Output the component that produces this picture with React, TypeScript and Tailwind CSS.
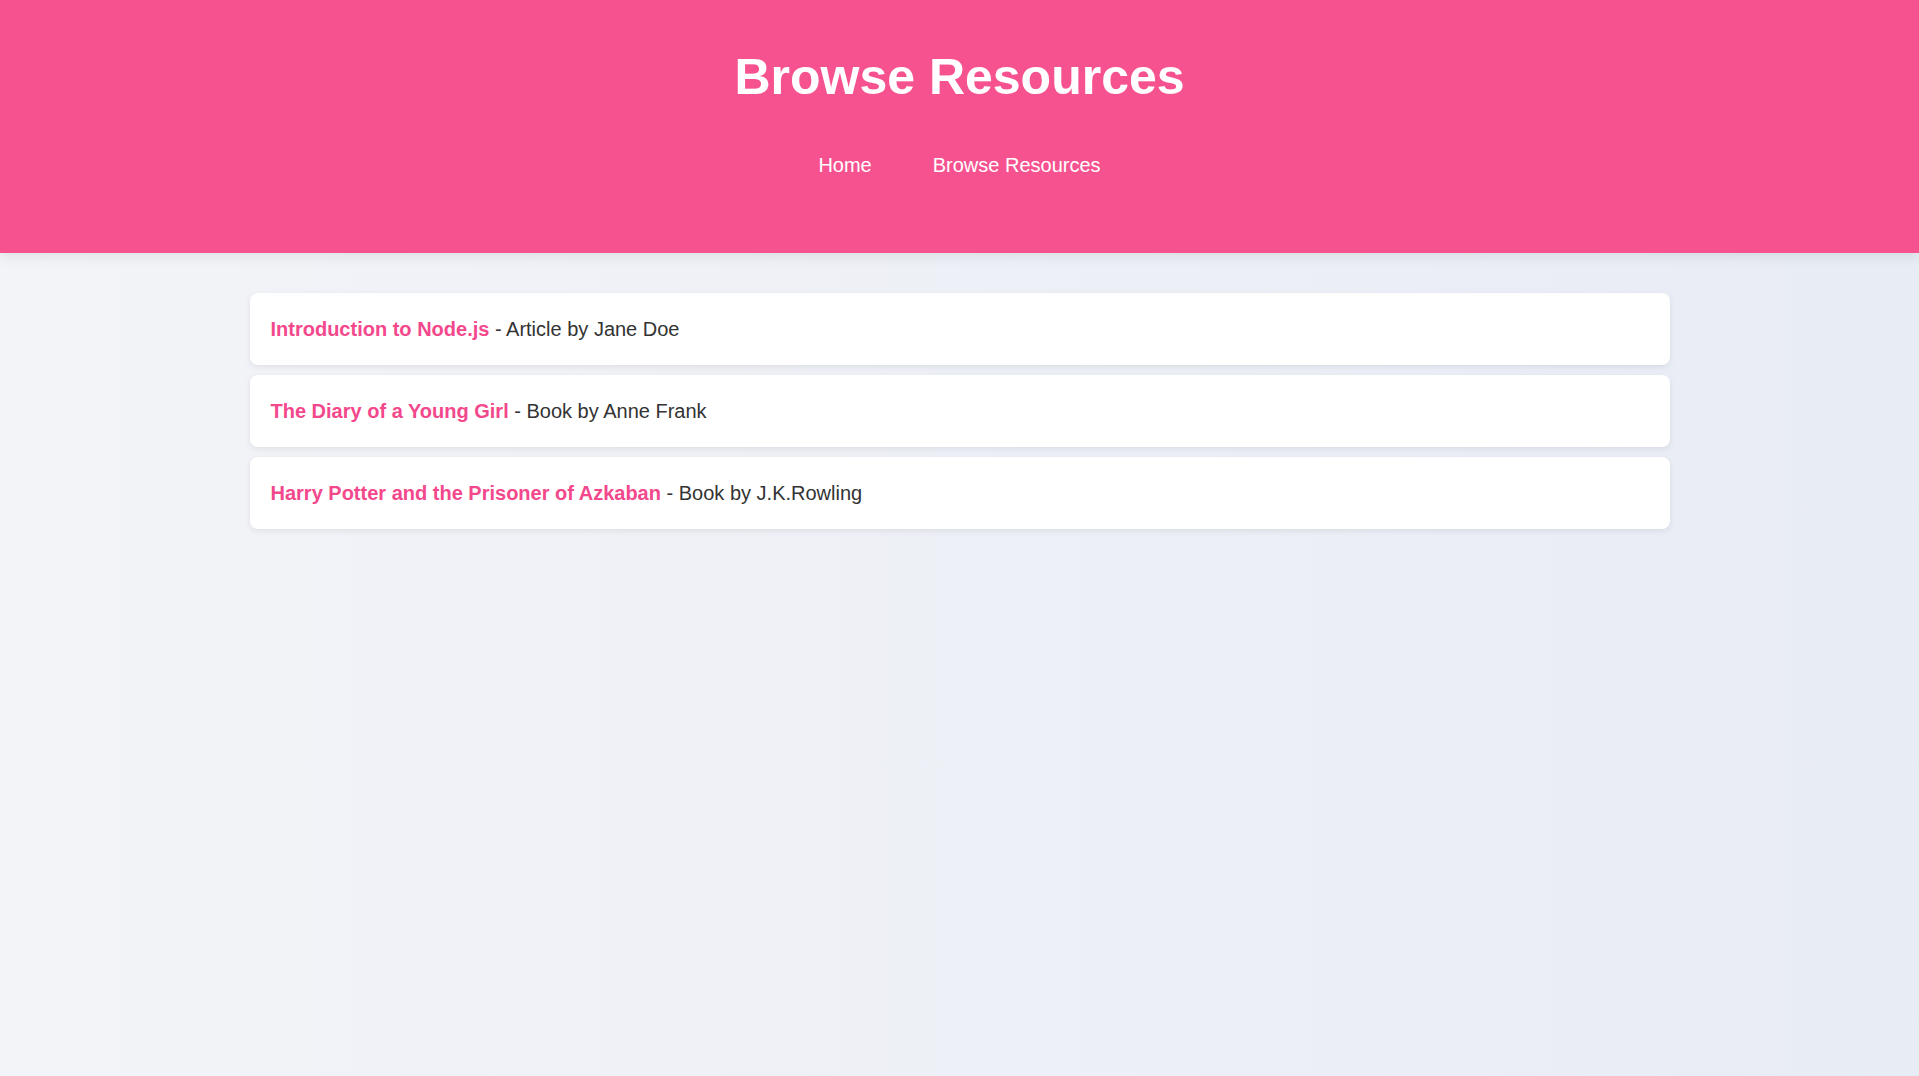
const resources = [
  { title: "Introduction to Node.js", kind: "Article", author: "Jane Doe" },
  { title: "The Diary of a Young Girl", kind: "Book", author: "Anne Frank" },
  { title: "Harry Potter and the Prisoner of Azkaban", kind: "Book", author: "J.K.Rowling" },
];

export default function App() {
  return (
    <div className="min-h-screen bg-gradient-to-r from-[#f3f4f8] to-[#e8ecf5] font-['Liberation_Sans',Arial,sans-serif]">
      <header className="h-[253px] bg-[#f75290] text-white text-center shadow-[0_4px_12px_rgba(0,0,0,0.08)]">
        <h1 className="pt-[41px] text-[50px] font-bold leading-[72px]">Browse Resources</h1>
        <nav className="mt-[40px] flex justify-center gap-[61px] text-[20px] leading-[24px]">
          <a href="#" className="text-white">Home</a>
          <a href="#" className="text-white">Browse Resources</a>
        </nav>
      </header>

      <main className="w-[1420px] mx-auto pt-[40px] flex flex-col gap-[10px]">
        {resources.map((r) => (
          <div
            key={r.title}
            className="h-[72px] flex items-center pl-[21px] pr-5 bg-white rounded-lg shadow-[0_2px_6px_rgba(0,0,0,0.08)] text-[20px] text-[#333]"
          >
            <a href="#" className="font-bold text-[#f3488c]">{r.title}</a>
            <span className="whitespace-pre"> - {r.kind} by {r.author}</span>
          </div>
        ))}
      </main>
    </div>
  );
}
